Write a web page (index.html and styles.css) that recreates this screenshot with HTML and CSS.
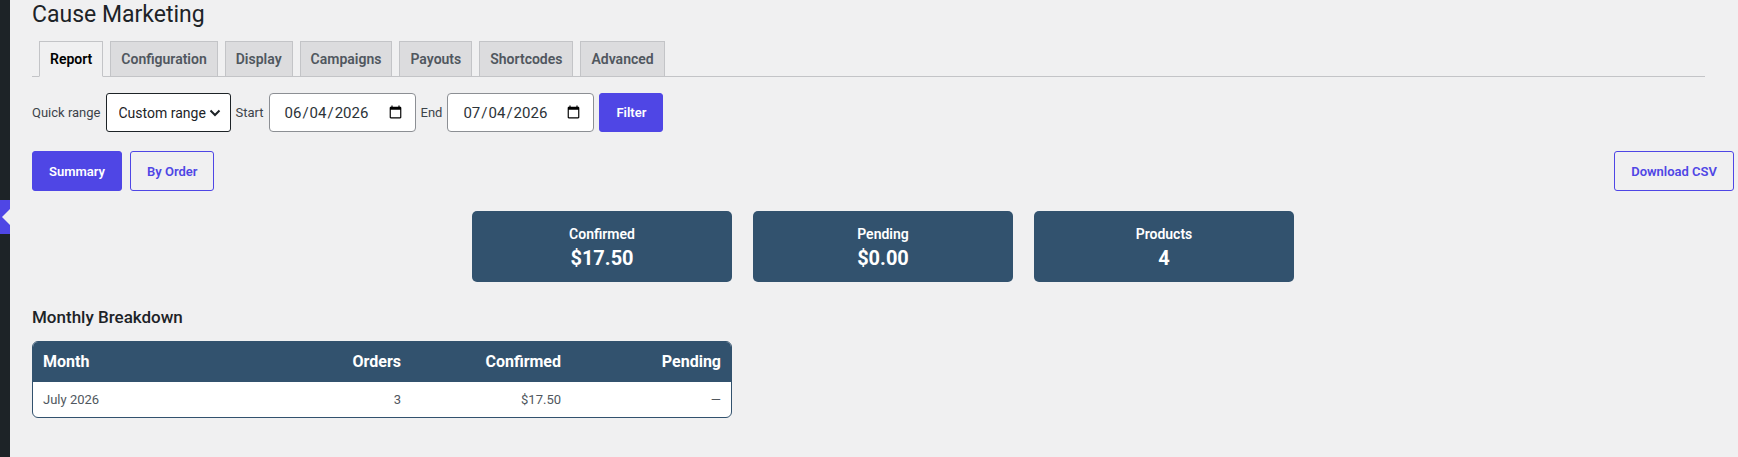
FILE: index.html
```html
<!DOCTYPE html>
<html lang="en">
<head>
    <meta charset="UTF-8">
    <meta name="viewport" content="width=device-width, initial-scale=1.0">
    <title>Cause Marketing</title>
    <link rel="stylesheet" href="styles.css">
</head>
<body>
    <div class="adminmenu">
        <div class="menu-current"><span class="menu-arrow"></span></div>
    </div>
    <div class="content">
        <div class="wrap">
            <h1>Cause Marketing</h1>
            <nav class="nav-tab-wrapper">
                <a class="nav-tab nav-tab-active" href="#">Report</a>
                <a class="nav-tab" href="#">Configuration</a>
                <a class="nav-tab" href="#">Display</a>
                <a class="nav-tab" href="#">Campaigns</a>
                <a class="nav-tab" href="#">Payouts</a>
                <a class="nav-tab" href="#">Shortcodes</a>
                <a class="nav-tab" href="#">Advanced</a>
            </nav>

            <form class="range-form" onsubmit="return false">
                <label for="quickRange">Quick range</label>
                <div class="select-wrap">
                    <select id="quickRange" class="range-select">
                        <option>Custom range</option>
                        <option>Last 7 days</option>
                        <option>Last 30 days</option>
                    </select>
                    <svg class="chevron" width="12" height="8" viewBox="0 0 12 8"><path d="M1.5 1.5 L6 6 L10.5 1.5" fill="none" stroke="#1d2327" stroke-width="2"/></svg>
                </div>
                <label for="startDate">Start</label>
                <input id="startDate" class="date-input" type="date" value="2026-06-04">
                <label for="endDate">End</label>
                <input id="endDate" class="date-input" type="date" value="2026-07-04">
                <button class="btn btn-primary" type="submit">Filter</button>
            </form>

            <div class="view-bar">
                <div class="view-toggle">
                    <button class="btn btn-primary btn-large">Summary</button>
                    <button class="btn btn-outline btn-large">By Order</button>
                </div>
                <button class="btn btn-outline btn-large">Download CSV</button>
            </div>

            <div class="cards">
                <div class="card">
                    <div class="card-label">Confirmed</div>
                    <div class="card-value">$17.50</div>
                </div>
                <div class="card">
                    <div class="card-label">Pending</div>
                    <div class="card-value">$0.00</div>
                </div>
                <div class="card">
                    <div class="card-label">Products</div>
                    <div class="card-value">4</div>
                </div>
            </div>

            <h2>Monthly Breakdown</h2>
            <table class="breakdown">
                <colgroup>
                    <col>
                    <col class="col-num">
                    <col class="col-num">
                    <col class="col-num">
                </colgroup>
                <thead>
                    <tr>
                        <th>Month</th>
                        <th class="num">Orders</th>
                        <th class="num">Confirmed</th>
                        <th class="num">Pending</th>
                    </tr>
                </thead>
                <tbody>
                    <tr>
                        <td>July 2026</td>
                        <td class="num">3</td>
                        <td class="num">$17.50</td>
                        <td class="num">&mdash;</td>
                    </tr>
                </tbody>
            </table>
        </div>
    </div>
</body>
</html>
```

FILE: styles.css
```css
body {
    margin: 0;
    display: flex;
    height: 100vh;
    overflow: hidden;
    background-color: #f0f0f1;
    color: #1d2327;
    font-family: -apple-system, BlinkMacSystemFont, "Segoe UI", Roboto, "Noto Sans", sans-serif;
    font-size: 13px;
}
.adminmenu {
    width: 10px;
    flex: 0 0 10px;
    background-color: #1d2327;
}
.menu-current {
    position: relative;
    margin-top: 200px;
    height: 34px;
    background-color: #4f46e5;
}
.menu-arrow {
    position: absolute;
    right: 0;
    top: 9px;
    width: 0;
    height: 0;
    border: 8px solid transparent;
    border-left-width: 0;
    border-right-color: #f0f0f1;
}
.content {
    flex: 1;
    padding: 0 4px 0 22px;
}
h1 {
    margin: 0;
    padding-bottom: 3px;
    font-size: 23px;
    font-weight: 400;
    line-height: 29px;
}
.nav-tab-wrapper {
    display: flex;
    align-items: flex-end;
    gap: 7px;
    padding: 9px 0 0 7px;
    margin-right: 29px;
    border-bottom: 1px solid #c3c4c7;
}
.nav-tab {
    margin-bottom: -1px;
    padding: 5px 10px;
    border: 1px solid #c3c4c7;
    background-color: #dcdcde;
    color: #50575e;
    font-size: 14px;
    font-weight: 600;
    line-height: 24px;
    text-decoration: none;
}
.nav-tab-active {
    background-color: #f0f0f1;
    border-bottom-color: #f0f0f1;
    color: #000;
}
.range-form {
    display: flex;
    align-items: center;
    gap: 5px;
    margin-top: 16px;
}
.range-form label {
    color: #3c434a;
    font-size: 13px;
}
.select-wrap {
    position: relative;
    display: flex;
}
.range-select {
    appearance: none;
    width: 125px;
    height: 39px;
    padding: 0 24px 0 12px;
    border: 1px solid #1d2327;
    border-radius: 3px;
    background-color: #fff;
    color: #1d2327;
    font-family: inherit;
    font-size: 14px;
}
.chevron {
    position: absolute;
    right: 10px;
    top: 16px;
    pointer-events: none;
}
.date-input {
    box-sizing: border-box;
    width: 147px;
    height: 39px;
    padding: 0 10px 0 14px;
    border: 1px solid #8c8f94;
    border-radius: 4px;
    background-color: #fff;
    color: #2c3338;
    font-family: inherit;
    font-size: 15px;
}
.btn {
    box-sizing: border-box;
    height: 39px;
    padding: 0 16px;
    border: 1px solid #4f46e5;
    border-radius: 3px;
    font-family: inherit;
    font-size: 13px;
    font-weight: 600;
    cursor: pointer;
}
.btn-primary {
    background-color: #4f46e5;
    color: #fff;
}
.btn-outline {
    background-color: transparent;
    color: #4f46e5;
}
.btn-large {
    height: 40px;
}
.view-bar {
    display: flex;
    justify-content: space-between;
    margin-top: 19px;
}
.view-toggle {
    display: flex;
    gap: 8px;
}
.cards {
    display: flex;
    justify-content: center;
    gap: 21px;
    margin-top: 20px;
}
.card {
    box-sizing: border-box;
    width: 260px;
    height: 71px;
    padding: 14px 10px 11px;
    border-radius: 5px;
    background-color: #32526e;
    color: #fff;
    text-align: center;
}
.card-label {
    font-size: 14px;
    font-weight: 600;
    line-height: 19px;
}
.card-value {
    margin-top: 2px;
    font-size: 20px;
    font-weight: 700;
    line-height: 24px;
}
h2 {
    margin: 24px 0 13px;
    font-size: 17px;
    font-weight: 500;
    line-height: 22px;
}
.breakdown {
    width: 700px;
    table-layout: fixed;
    border: 1px solid #32526e;
    border-radius: 6px;
    border-spacing: 0;
    overflow: hidden;
    background-color: #fff;
}
.col-num {
    width: 160px;
}
.breakdown th {
    padding: 10px;
    background-color: #32526e;
    color: #fff;
    font-size: 16px;
    font-weight: 700;
    line-height: 20px;
    text-align: left;
}
.breakdown td {
    padding: 8px 10px;
    color: #50575e;
    font-size: 13px;
    line-height: 19px;
}
.breakdown .num {
    text-align: right;
}
```
